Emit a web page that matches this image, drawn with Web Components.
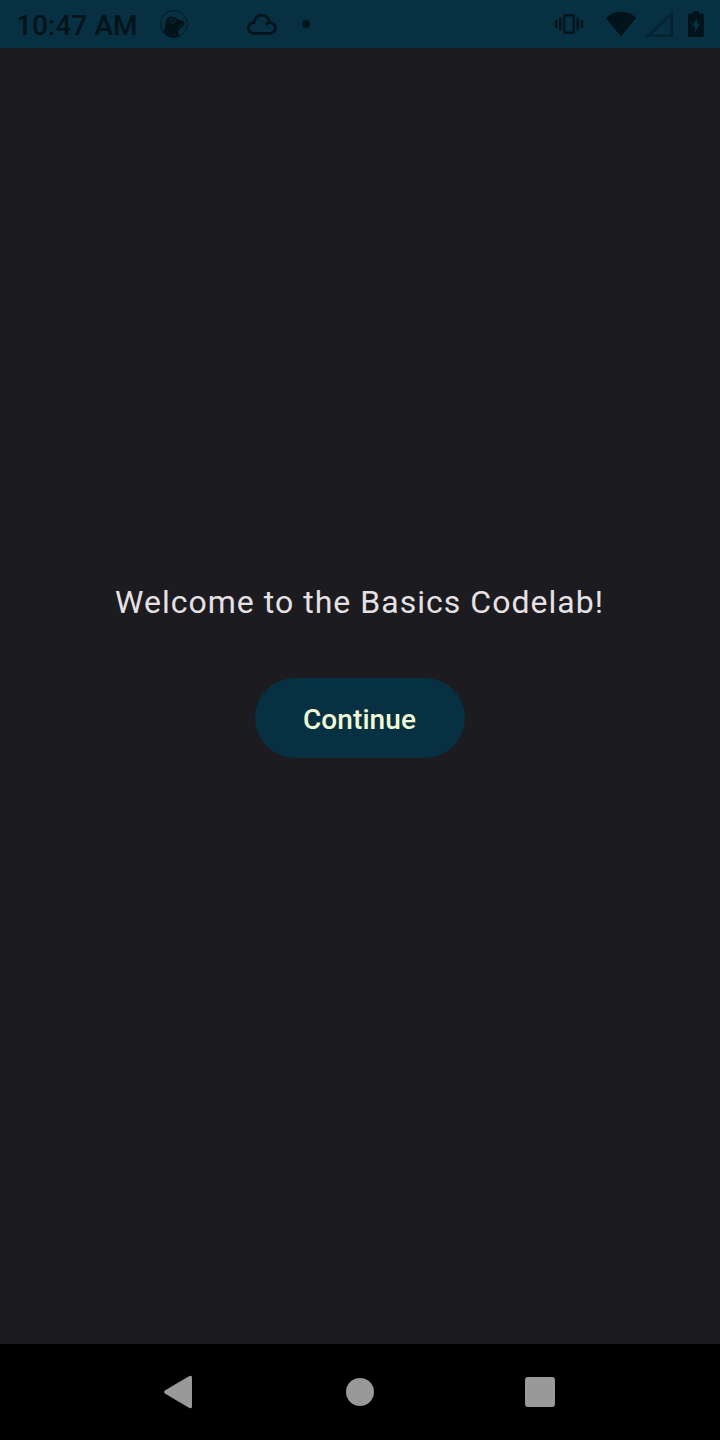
<!DOCTYPE html>
<html lang="en">
<head>
<meta charset="utf-8">
<title>Basics Codelab</title>
<style>
html, body { margin: 0; height: 100%; background: #1c1b1f; overflow: hidden; }
body { font-family: Roboto, "Liberation Sans", sans-serif; }
</style>
</head>
<body>
<phone-screen>
  <status-bar slot="top">10:47 AM</status-bar>
  <greeting-text>Welcome to the Basics Codelab!</greeting-text>
  <filled-button>Continue</filled-button>
  <nav-bar slot="bottom"></nav-bar>
</phone-screen>
<script>
class TemplateElement extends HTMLElement {
  constructor() {
    super();
    this.attachShadow({ mode: "open" }).innerHTML = this.constructor.markup;
  }
}

customElements.define("phone-screen", class extends TemplateElement {
  static markup = `
    <style>
      :host { display: flex; flex-direction: column; height: 1440px; width: 720px; background: #1c1b1f; }
      main { flex: 1; display: flex; flex-direction: column; align-items: center; justify-content: center; gap: 56px; padding-bottom: 50px; box-sizing: border-box; }
    </style>
    <slot name="top"></slot>
    <main><slot></slot></main>
    <slot name="bottom"></slot>`;
});

customElements.define("status-bar", class extends TemplateElement {
  static markup = `
    <style>
      :host { display: flex; height: 48px; box-sizing: border-box; background: #073042; color: #03131a; }
      .clock { width: 144px; padding-left: 16px; font-size: 28px; font-weight: 500; letter-spacing: .08px; line-height: 52px; white-space: nowrap; }
      .left, .right { display: flex; align-items: center; }
      .left { gap: 58px; }
      .left svg:last-child { margin-left: -34px; }
      .right { margin-left: auto; padding-right: 15px; }
      svg { display: block; }
    </style>
    <div class="clock"><slot></slot></div>
    <div class="left">
      <svg width="28" height="48" viewBox="0 0 28 48" fill="currentColor">
        <circle cx="14" cy="24" r="13.4" fill="none" stroke="currentColor" stroke-width="1" opacity=".75"/>
        <path d="M3.2 32C5.4 29.6 5.4 25.6 5.5 22.6C5.8 18.6 9 16.6 12.6 16.8C15.4 16.9 17 18.6 18.4 19.8L22.8 21C24.6 21.7 25 22.8 24.3 24.4C23.2 26.8 21 28 19.4 28.8C17.8 30.6 18.2 33.4 19.2 36.6C13.6 39.4 6.6 37.6 3.2 32Z"/>
        <circle cx="12.6" cy="20.6" r="2.3" fill="none" stroke="#073042" stroke-width="1"/>
        <path d="M17.6 25.8Q20.6 26 22.8 24.2" stroke="#073042" stroke-width=".5" fill="none"/>
      </svg>
      <svg width="32" height="48" viewBox="0 0 32 48" fill="none" stroke="currentColor" stroke-width="2.8" stroke-linecap="round">
        <path d="M20.7 24C21.6 23.1 22.6 22.6 24 22.6C27.2 22.6 29.4 25 29.4 28C29.4 31.1 27.2 33.4 24 33.4H8.4C4.8 33.4 2.5 31.2 2.5 28C2.5 25 4.7 22.7 8 22.5C8.7 18.2 11.6 15.2 15.6 15.2C19.7 15.2 22.6 18.1 23.4 22.4"/>
      </svg>
      <svg width="8" height="48" viewBox="0 0 8 48"><circle cx="4" cy="24" r="4" fill="currentColor"/></svg>
    </div>
    <div class="right">
      <svg width="52" height="48" viewBox="0 0 52 48" fill="currentColor">
        <path d="M1 20h2.5v8H1zM5 17.8h2.5v12.4H5zM22.5 17.8H25v12.4h-2.5zM26.5 20H29v8h-2.5z"/>
        <rect x="10.2" y="15.2" width="9.6" height="17.6" rx=".9" fill="none" stroke="currentColor" stroke-width="2.4"/>
      </svg>
      <svg width="40" height="48" viewBox="0 0 40 48" fill="currentColor"><path d="M-.2 18C8 9.6 22 9.6 30 18L15 36.4Z"/></svg>
      <svg width="41" height="48" viewBox="0 0 41 48"><path fill="#052331" fill-rule="evenodd" d="M-.8 37L27 10.7V37ZM5.8 34.4H24.4V16.8Z"/></svg>
      <svg width="18" height="48" viewBox="0 0 18 48"><path fill="currentColor" fill-rule="evenodd" d="M6 11h6v2.4h3.2q1.6 0 1.6 1.6v20.4q0 1.6-1.6 1.6H2.6Q1 37 1 35.4V15q0-1.6 1.6-1.6H6zM10.2 17.8L5 26.2H7.9V32.7L12.7 23.8H10.2Z"/></svg>
    </div>`;
});

customElements.define("greeting-text", class extends TemplateElement {
  static markup = `
    <style>
      :host { display: block; height: 38px; font-size: 32px; line-height: 37px; letter-spacing: 1.02px; padding-right: 1px; color: #e6e1e5; white-space: nowrap; }
    </style><slot></slot>`;
});

customElements.define("filled-button", class extends TemplateElement {
  static markup = `
    <style>
      :host { display: block; }
      button { display: block; width: 210px; height: 80px; padding: 4px 1px 0 0; border: 0; border-radius: 40px; background: #073042; color: #effad3; font: 500 28px/40px Roboto, "Liberation Sans", sans-serif; letter-spacing: .08px; }
    </style>
    <button type="button"><slot></slot></button>`;
});

customElements.define("nav-bar", class extends TemplateElement {
  static markup = `
    <style>
      :host { display: grid; grid-template-columns: repeat(3, 180px); justify-content: center; justify-items: center; align-items: center; height: 96px; background: #000; }
      svg { display: block; fill: #999; }
    </style>
    <svg width="40" height="40" viewBox="0 0 40 40"><path d="M4.8 18.6L29.4 4.1Q32 3 32 5.5V34.5Q32 37 29.4 35.9L4.8 21.4Q3.2 20 4.8 18.6Z"/></svg>
    <svg width="40" height="40" viewBox="0 0 40 40"><circle cx="20" cy="20" r="14"/></svg>
    <svg width="40" height="40" viewBox="0 0 40 40"><rect x="5" y="5" width="30" height="30" rx="3"/></svg>`;
});
</script>
</body>
</html>
